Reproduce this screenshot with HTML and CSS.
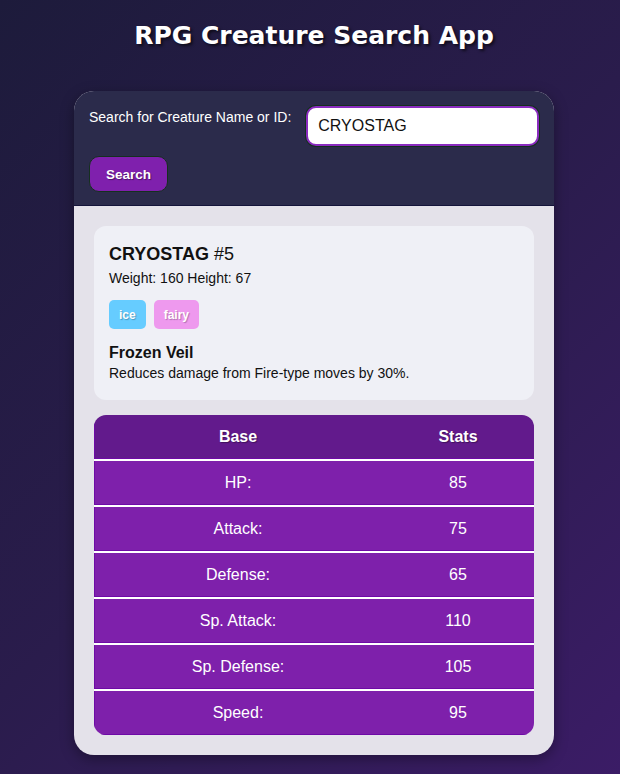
FILE: index.html
```html
<!DOCTYPE html>
<html lang="en">
<head>
<meta charset="utf-8">
<title>RPG Creature Search App</title>
<link rel="stylesheet" href="styles.css">
</head>
<body>
<h1 class="title">RPG Creature Search App</h1>
<main class="app">
  <section class="search">
    <div class="search-row">
      <label class="search-label" for="search-input">Search for Creature Name or ID:</label>
      <input class="search-input" id="search-input" type="text" value="CRYOSTAG">
    </div>
    <button class="search-btn" type="button">Search</button>
  </section>
  <section class="results">
    <div class="info-card">
      <h2 class="creature-name"><strong>CRYOSTAG</strong> #5</h2>
      <p class="creature-size">Weight: 160 Height: 67</p>
      <div class="types">
        <span class="type type-ice">ice</span>
        <span class="type type-fairy">fairy</span>
      </div>
      <h3 class="ability-name">Frozen Veil</h3>
      <p class="ability-desc">Reduces damage from Fire-type moves by 30%.</p>
    </div>
    <div class="stats-wrap">
      <table class="stats">
        <thead>
          <tr><th class="col-base">Base</th><th>Stats</th></tr>
        </thead>
        <tbody>
          <tr><td>HP:</td><td>85</td></tr>
          <tr><td>Attack:</td><td>75</td></tr>
          <tr><td>Defense:</td><td>65</td></tr>
          <tr><td>Sp. Attack:</td><td>110</td></tr>
          <tr><td>Sp. Defense:</td><td>105</td></tr>
          <tr><td>Speed:</td><td>95</td></tr>
        </tbody>
      </table>
    </div>
  </section>
</main>
</body>
</html>
```
FILE: styles.css
```css
* { box-sizing: border-box; }

html, body { height: 100%; }

body {
  margin: 0;
  padding: 0 0 0 8px;
  min-height: 774px;
  background: linear-gradient(135deg, #1d1b3b 0%, #2a1c4c 50%, #3b1c66 100%);
  font-family: "Liberation Sans", Arial, sans-serif;
  color: #111;
  overflow: hidden;
}

.title {
  margin: 0;
  padding: 21px 0 0;
  height: 91px;
  text-align: center;
  font-family: "Comic Sans MS", "DejaVu Sans", sans-serif;
  font-size: 25px;
  font-weight: bold;
  color: #fff;
  text-shadow: 2px 2px 3px rgba(0, 0, 0, 0.6);
}

.app {
  width: 480px;
  margin: 0 auto;
  border-radius: 20px;
  overflow: hidden;
  background: #e4e2ea;
  box-shadow: 0 4px 14px rgba(0, 0, 0, 0.35);
}

.search {
  background: #2b2b4b;
  padding: 15px 15px 13px;
  border-bottom: 1px solid #14143a;
}

.search-row {
  display: flex;
  align-items: flex-start;
  gap: 15px;
}

.search-label {
  color: #fff;
  font-size: 14px;
  margin-top: 3px;
  white-space: nowrap;
}

.search-input {
  flex: 1;
  height: 40px;
  margin: 0;
  padding: 0 10px;
  border: 2px solid #8a2bbf;
  border-radius: 10px;
  background: #fff;
  box-shadow: 0 0 0 1px #14301e;
  font-family: "Liberation Sans", Arial, sans-serif;
  font-size: 16px;
  color: #111;
  outline: none;
}

.search-btn {
  display: block;
  margin-top: 10px;
  height: 36px;
  padding: 0 16px;
  border: 1px solid #15301f;
  border-radius: 10px;
  background: #7f20ad;
  color: #fff;
  font-family: "Liberation Sans", Arial, sans-serif;
  font-size: 13.5px;
  font-weight: bold;
  text-shadow: 1px 1px 1px rgba(0, 0, 0, 0.4);
}

.results {
  padding: 20px;
  display: flex;
  flex-direction: column;
  gap: 15px;
}

.info-card {
  background: #eff0f6;
  border-radius: 12px;
  padding: 18px 15px 18px;
}

.creature-name {
  margin: 0;
  font-size: 18px;
  font-weight: normal;
  line-height: 21px;
  color: #111;
}

.creature-name strong { font-weight: bold; }

.creature-size {
  margin: 5px 0 0;
  font-size: 14px;
  line-height: 17px;
}

.types {
  display: flex;
  gap: 8px;
  margin-top: 13px;
}

.type {
  display: inline-flex;
  align-items: center;
  height: 29px;
  padding: 0 10px;
  border-radius: 5px;
  color: #fff;
  font-size: 12px;
  font-weight: bold;
  text-shadow: 1px 1px 1px rgba(0, 0, 0, 0.25);
}

.type-ice { background: #66ccff; }
.type-fairy { background: #ee99ee; }

.ability-name {
  margin: 14px 0 0;
  font-size: 16px;
  line-height: 19px;
  font-weight: bold;
}

.ability-desc {
  margin: 3px 0 0;
  font-size: 14px;
  line-height: 17px;
}

.stats-wrap {
  border-radius: 12px;
  overflow: hidden;
}

.stats {
  width: 100%;
  border-collapse: separate;
  border-spacing: 0;
  color: #fff;
  font-size: 16px;
  text-align: center;
}

.stats th,
.stats td {
  padding: 0;
  line-height: 44px;
  box-shadow: inset 0 -1px 0 #6e0aa6;
}

.stats th:first-child,
.stats td:first-child {
  box-shadow: inset 1px -1px 0 #6e0aa6;
}

.stats th {
  background: #621a8c;
  font-weight: bold;
  text-shadow: 1px 1px 1px rgba(0, 0, 0, 0.35);
}

.stats td { background: #7e20ab; }

.stats .col-base { width: 288px; }

.stats tbody td { border-top: 2px solid #fff; }
```
